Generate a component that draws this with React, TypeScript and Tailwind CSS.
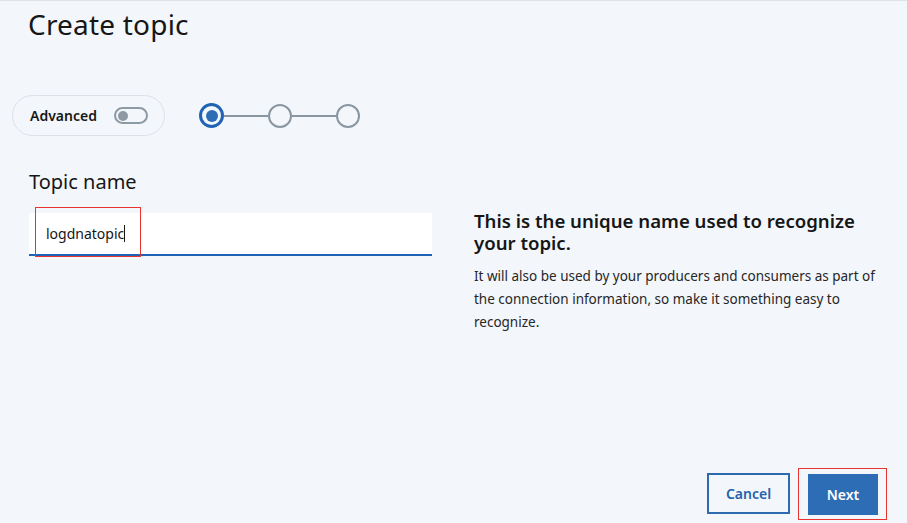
export default function App() {
  const font = { fontFamily: '"Noto Sans", "Open Sans", sans-serif' };

  return (
    <div
      className="w-[907px] h-[523px] bg-[#f3f6fb] border-t border-[#dfe3e8] flex flex-col text-[#161616] overflow-hidden"
      style={font}
    >
      {/* Title */}
      <h1 className="pl-[28px] pt-[1px] text-[28px] leading-[44px] font-normal tracking-[0.2px]">Create topic</h1>

      {/* Advanced toggle + stepper */}
      <div className="flex items-center mt-[49px] pl-[12px]">
        <div className="flex items-center h-[41px] w-[153px] rounded-full border border-[#dde2e8] pl-[17px] gap-[17px]">
          <span className="text-[14px] font-semibold">Advanced</span>
          <span className="w-[34px] h-[17px] rounded-full border-2 border-[#8d99a3] flex items-center px-[2px]">
            <span className="w-[10px] h-[10px] rounded-full bg-[#8d99a3]" />
          </span>
        </div>
        <div className="flex items-center ml-[34px]">
          <span className="w-[25px] h-[25px] rounded-full border-[3px] border-[#1f63b4] flex items-center justify-center">
            <span className="w-[12px] h-[12px] rounded-full bg-[#2d6db6]" />
          </span>
          <span className="w-[44px] h-[2px] bg-[#8897a2]" />
          <span className="w-[24px] h-[24px] rounded-full border-[2.5px] border-[#8897a2]" />
          <span className="w-[44px] h-[2px] bg-[#8897a2]" />
          <span className="w-[24px] h-[24px] rounded-full border-[2.5px] border-[#8897a2]" />
        </div>
      </div>

      {/* Form + help text */}
      <div className="flex mt-[32px] pl-[29px]">
        <div className="w-[403px]">
          <label className="block text-[20px] leading-[28px]">Topic name</label>
          <div className="relative mt-[17px] h-[43px] bg-white border-b-2 border-[#1f63b4] flex items-center pl-[17px] text-[14px]">
            <span>logdnatopic</span>
            <span className="w-px h-[17px] bg-[#161616]" />
            <span className="absolute left-[6px] top-[-6px] w-[106px] h-[50px] border border-[#e8332e]" />
          </div>
        </div>
        <div className="ml-[42px] mt-[42px] w-[410px]">
          <h2 className="w-[398px] text-[18.6px] leading-[22px] font-semibold">
            This is the unique name used to recognize your topic.
          </h2>
          <p className="mt-[11px] text-[13.5px] leading-[23px] text-[#262626]">
            It will also be used by your producers and consumers as part of the connection information, so make it something easy to recognize.
          </p>
        </div>
      </div>

      {/* Footer buttons */}
      <div className="mt-auto flex justify-end items-start pr-[20px] pb-[3px] gap-[8px]">
        <button className="mt-[5px] w-[83px] h-[41px] border-2 border-[#2e6ab0] text-[#2463ac] text-[14px] font-semibold">
          Cancel
        </button>
        <div className="border border-[#e8332e] pl-[9px] pr-[8px] pt-[5px] pb-[4px]">
          <button className="w-[70px] h-[41px] bg-[#2d6db6] text-white text-[14px] font-semibold">Next</button>
        </div>
      </div>
    </div>
  );
}
